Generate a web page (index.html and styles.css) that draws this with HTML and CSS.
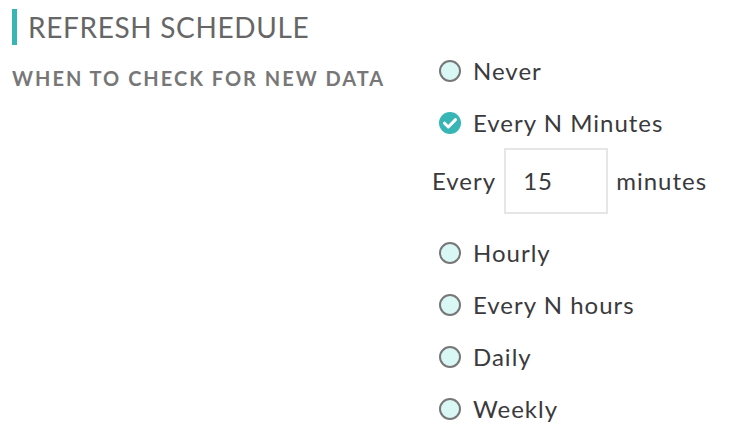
FILE: index.html
```html
<!DOCTYPE html>
<html>
<head>
<meta charset="utf-8">
<link rel="stylesheet" href="styles.css">
</head>
<body>
<div class="page">
  <h1 class="title">REFRESH SCHEDULE</h1>
  <div class="row">
    <div class="label">WHEN TO CHECK FOR NEW DATA</div>
    <div class="options">
      <div class="opt"><span class="radio"></span><span class="text">Never</span></div>
      <div class="opt"><span class="radio checked"><svg viewBox="0 0 22 22" width="22" height="22"><circle cx="11" cy="11" r="11" fill="#38b6b6"/><path d="M5.5 11.2 L9.3 15 L16.5 7.6" fill="none" stroke="#fff" stroke-width="3" stroke-linecap="round" stroke-linejoin="round"/></svg></span><span class="text">Every N Minutes</span></div>
      <div class="every"><span class="text">Every</span><span class="box">15</span><span class="text">minutes</span></div>
      <div class="opt"><span class="radio"></span><span class="text">Hourly</span></div>
      <div class="opt"><span class="radio"></span><span class="text">Every N hours</span></div>
      <div class="opt"><span class="radio"></span><span class="text">Daily</span></div>
      <div class="opt"><span class="radio"></span><span class="text">Weekly</span></div>
    </div>
  </div>
</div>
</body>
</html>
```
FILE: styles.css
```css
html, body { margin: 0; padding: 0; background: #fff; }
body { font-family: "Lato", "Open Sans", sans-serif; color: #3a3a3d; }
.page { padding: 9px 0 0 12px; }
.title {
  margin: 0;
  border-left: 5px solid #38b6b6;
  padding-left: 11px;
  font-weight: 400;
  font-size: 28px;
  line-height: 36px;
  color: #666;
  letter-spacing: 0.65px;
}
.row { display: flex; margin-top: 0; }
.label {
  width: 420px;
  font-weight: 700;
  font-size: 20px;
  letter-spacing: 2px;
  color: #777;
  line-height: 24px;
  padding-top: 21px;
}
.options { display: flex; flex-direction: column; }
.opt { display: flex; align-items: center; height: 52px; padding-left: 7px; }
.radio {
  width: 22px; height: 22px; box-sizing: border-box;
  border: 2px solid #777; border-radius: 50%;
  background: #d9f7f5; margin-right: 12px; flex: none;
}
.radio.checked { border: none; background: none; }
.radio svg { display: block; }
.text { font-size: 24px; line-height: 30px; letter-spacing: 1px; }
.every { display: flex; align-items: center; height: 66px; margin: -1px 0 13px; }
.box {
  width: 104px; height: 66px; box-sizing: border-box;
  border: 2px solid #e6e6e6;
  margin: 0 8px;
  font-size: 24px; line-height: 62px; padding-left: 17px; letter-spacing: 1px;
}
```
